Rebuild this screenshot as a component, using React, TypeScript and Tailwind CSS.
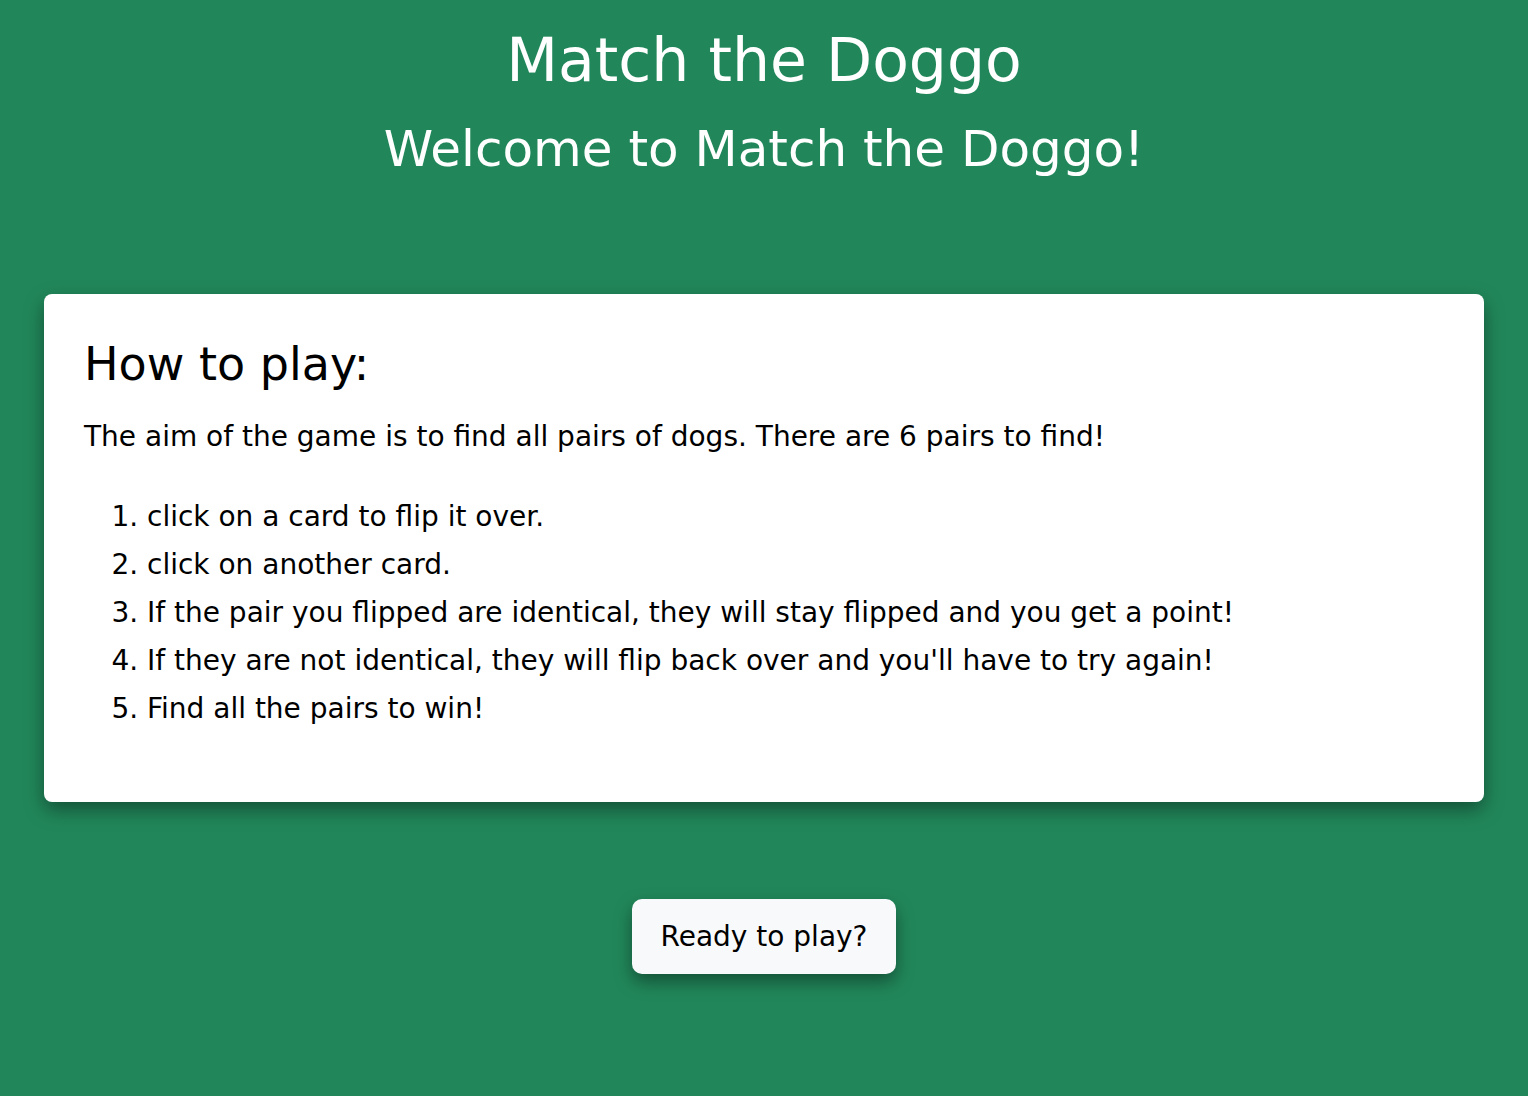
import React from 'react';

const steps = [
  'click on a card to flip it over.',
  'click on another card.',
  'If the pair you flipped are identical, they will stay flipped and you get a point!',
  "If they are not identical, they will flip back over and you'll have to try again!",
  'Find all the pairs to win!',
];

export default function App() {
  return (
    <div
      className="min-h-screen bg-[#21875a] px-11 pt-6 pb-16"
      style={{ fontFamily: '"DejaVu Sans", "Noto Sans", sans-serif' }}
    >
      <h1 className="text-center text-[60px] leading-[72px] text-white">Match the Doggo</h1>
      <h2 className="mt-[21px] text-center text-[50px] leading-[64px] text-white">Welcome to Match the Doggo!</h2>

      {/* instructions card */}
      <div className="mt-[113px] rounded-lg bg-white px-10 pt-[42px] pb-[69px] shadow-[0_8px_20px_rgba(0,0,0,0.4)]">
        <h3 className="text-[46px] leading-[56px] text-black">How to play:</h3>
        <p className="mt-[28px] text-[28px] leading-[34px] text-black">
          The aim of the game is to find all pairs of dogs. There are 6 pairs to find!
        </p>
        <ol className="mt-[39px] list-decimal pl-[63px] text-[28px] leading-[48px] text-black">
          {steps.map((s, i) => (
            <li key={i}>{s}</li>
          ))}
        </ol>
      </div>

      <div className="mt-[97px] flex justify-center">
        <button className="h-[75px] w-[264px] rounded-[10px] bg-[#f8f9fb] text-[28px] text-black shadow-[0_8px_18px_rgba(0,0,0,0.4)]">
          Ready to play?
        </button>
      </div>
    </div>
  );
}
